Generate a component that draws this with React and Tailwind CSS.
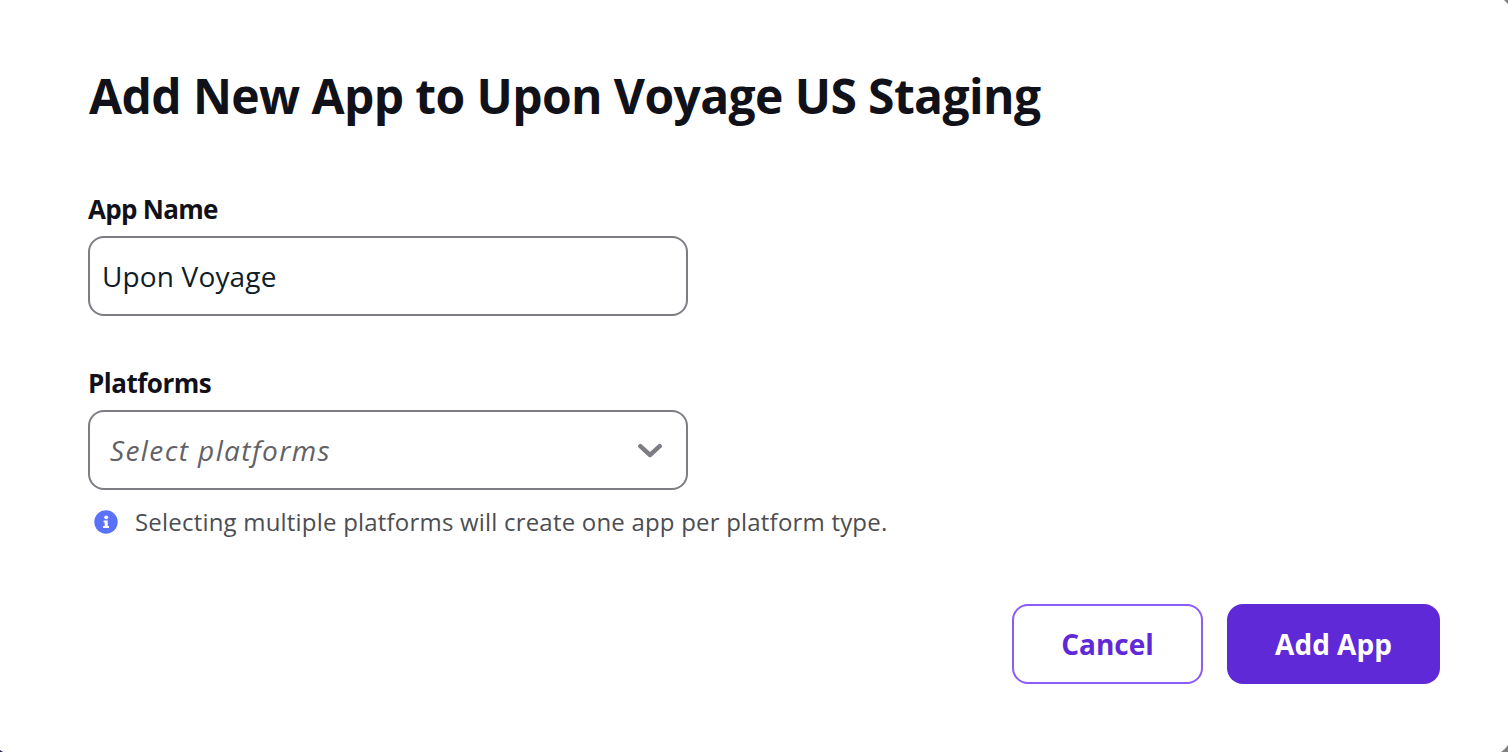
import React from 'react';

function InfoIcon() {
  return (
    <svg className="h-6 w-6 shrink-0" viewBox="0 0 24 24">
      <circle cx="12" cy="12" r="11.7" fill="#5a72fa" />
      <circle cx="12.2" cy="7.3" r="1.9" fill="#fff" />
      <path d="M9.6 10.5h4.1v5.6h1.3v2H9.1v-2h1.600v-3.600H9.600z" fill="#fff" />
    </svg>
  );
}

function ChevronIcon() {
  return (
    <svg className="h-6 w-6 shrink-0" viewBox="0 0 24 24" fill="none">
      <path d="M2.300 8.200 12 17l9.700-8.800" stroke="#7f7d84" strokeWidth="4.400" strokeLinecap="round" strokeLinejoin="round" />
    </svg>
  );
}

export default function App() {
  return (
    <main
      className="relative flex h-[752px] w-[1508px] flex-col overflow-hidden bg-white pl-[88px] pr-[68px] pt-[66px] text-[#11111a]"
      style={{ fontFamily: '"Open Sans", "Noto Sans", sans-serif' }}
    >
      <h1 className="h-[60px] whitespace-nowrap pl-px text-[48px] leading-[60px] font-bold tracking-[-0.61px]">
        <span>Add New App to Upon Voyage US Staging</span>
      </h1>

      <label className="mt-[67px] h-8 text-[26px] leading-8 font-bold tracking-[-0.7px]">
        <span>App Name</span>
      </label>
      <div className="mt-[11px] flex h-20 w-[600px] items-center rounded-[16px] border-2 border-[#7f7d84] pl-3 text-[28px] leading-10 tracking-[0.15px] text-[#101c27]">
        <span>Upon Voyage</span>
      </div>

      <label className="mt-[51px] h-8 text-[26px] leading-8 font-bold tracking-[-0.5px]">
        <span>Platforms</span>
      </label>
      <div className="mt-[11px] flex h-20 w-[600px] items-center justify-between rounded-[16px] border-2 border-[#7f7d84] pl-5 pr-6 text-[28px] leading-10 tracking-[1.4px] text-[#626166] italic">
        <span>Select platforms</span>
        <ChevronIcon />
      </div>

      <div className="mt-4 flex h-8 items-center pl-1.5 text-[24px] leading-8 tracking-[0.2px] text-[#4d4d52]">
        <InfoIcon />
        <span className="ml-[17px] whitespace-nowrap">Selecting multiple platforms will create one app per platform type.</span>
      </div>

      <div className="mt-[66px] flex justify-end gap-6 text-[28px] leading-10 font-bold">
        <button className="flex h-20 w-[191px] items-center justify-center rounded-[16px] border-2 border-[#8b5cf6] text-[#6029d8]">
          <span>Cancel</span>
        </button>
        <button className="flex h-20 w-[213px] items-center justify-center rounded-[16px] bg-[#6029d8] text-white">
          <span>Add App</span>
        </button>
      </div>

      <svg className="absolute top-0 right-0 h-1 w-1" viewBox="0 0 4 4">
        <path d="M0 0h4v4z" fill="#808080" />
      </svg>
      <svg className="absolute right-0 bottom-0 h-[7px] w-[7px]" viewBox="0 0 7 7">
        <path d="M7 0v7H0Q4 4.500 7 0z" fill="#808080" />
      </svg>
      <svg className="absolute bottom-0 left-0 h-0.5 w-[3px]" viewBox="0 0 3 2">
        <path d="M0 0v2h3z" fill="#2c1f66" />
      </svg>
    </main>
  );
}
